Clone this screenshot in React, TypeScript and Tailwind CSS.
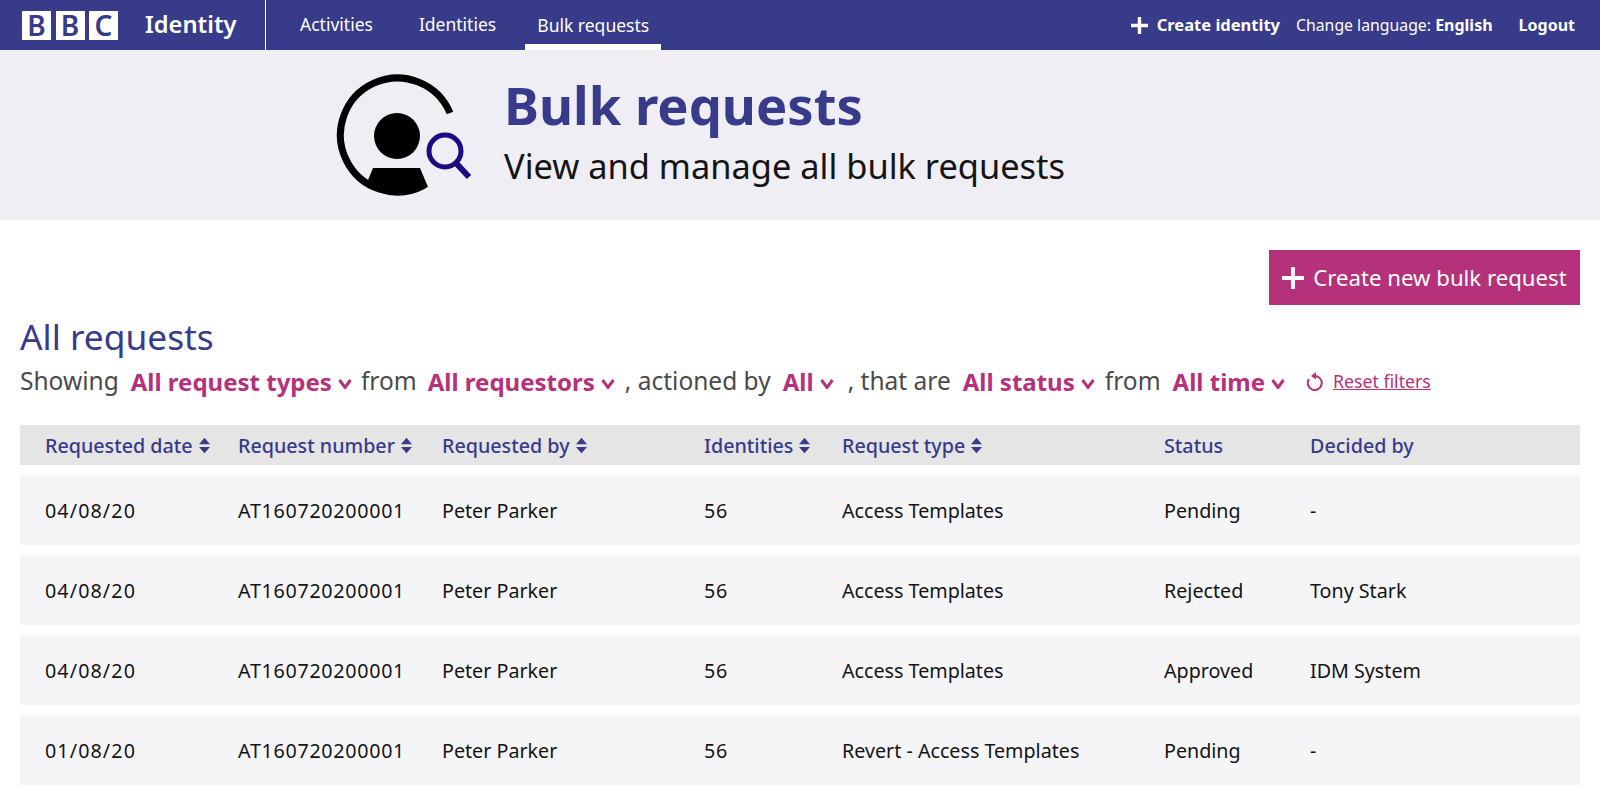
import React from 'react';

const rows = [
  { date: '04/08/20', type: 'Access Templates', status: 'Pending', decided: '-' },
  { date: '04/08/20', type: 'Access Templates', status: 'Rejected', decided: 'Tony Stark' },
  { date: '04/08/20', type: 'Access Templates', status: 'Approved', decided: 'IDM System' },
  { date: '01/08/20', type: 'Revert - Access Templates', status: 'Pending', decided: '-' },
];

const headers = [
  { label: 'Requested date', sort: true },
  { label: 'Request number', sort: true },
  { label: 'Requested by', sort: true },
  { label: 'Identities', sort: true },
  { label: 'Request type', sort: true },
  { label: 'Status', sort: false },
  { label: 'Decided by', sort: false },
];

const cols = 'grid grid-cols-[193px_204px_262px_138px_322px_146px_1fr] items-center px-[25px] pt-[2px]';

const Plus = ({ size, weight }: { size: number; weight: number }) => (
  <svg width={size} height={size} viewBox="0 0 20 20" className="shrink-0">
    <path d="M10 0V20M0 10H20" stroke="#fff" strokeWidth={weight} />
  </svg>
);

const Chevron = () => (
  <svg width="14" height="10" viewBox="0 0 14 10" className="shrink-0 mt-[5px]">
    <path d="M1.5 1L7 8.5L12.5 1" fill="none" stroke="#b5317a" strokeWidth="3" />
  </svg>
);

const Sort = () => (
  <svg width="11" height="17" viewBox="0 0 12 17" className="shrink-0">
    <path d="M6 0L12 7H0ZM0 10H12L6 17Z" fill="#383a8a" />
  </svg>
);

const Filter = ({ label }: { label: string }) => (
  <span className="flex items-center gap-[6px] text-[24px] font-bold text-[#b5317a]">
    {label}
    <Chevron />
  </span>
);

const Logo = () => (
  <div className="flex gap-[4.5px]">
    {['B', 'B', 'C'].map((letter, idx) => (
      <span
        key={idx}
        className="w-[29px] h-[29px] bg-white flex items-center justify-center text-[28px] leading-none font-semibold text-[#383a8a]"
      >
        {letter}
      </span>
    ))}
  </div>
);

const HeroIcon = () => (
  <svg width="145" height="130" viewBox="0 0 145 130" className="shrink-0 mt-[4px]">
    <path d="M122 41A57 57 0 1 0 96 113.5" fill="none" stroke="#000" strokeWidth="7" />
    <circle cx="69" cy="64" r="23" fill="#000" />
    <path d="M45 96H92L100 115A61 61 0 0 1 40 108Z" fill="#000" />
    <circle cx="117" cy="79" r="16" fill="none" stroke="#1d0a82" strokeWidth="5" />
    <path d="M128 91L141 105" stroke="#1d0a82" strokeWidth="6" />
  </svg>
);

const ResetIcon = () => (
  <svg width="18" height="19" viewBox="0 0 18 19" className="shrink-0">
    <path d="M3 7A7 7 0 1 0 9 4" fill="none" stroke="#b5317a" strokeWidth="2" />
    <path d="M10 0L5 4L10 7.5Z" fill="#b5317a" />
  </svg>
);

export default function App() {
  return (
    <div className="h-screen overflow-hidden bg-white font-['Noto_Sans',sans-serif]">
      {/* Nav */}
      <header className="h-[50px] bg-[#383a8a] flex items-stretch text-white">
        <div className="w-[266px] flex items-center pl-[22px] border-r border-white shrink-0">
          <Logo />
          <span className="ml-[27px] text-[23.7px] font-semibold">Identity</span>
        </div>
        <nav className="flex ml-[22px] text-[17.5px]">
          <a className="px-[12px] flex items-center pb-[1px]">Activities</a>
          <a className="ml-[22px] px-[12px] flex items-center pb-[1px]">Identities</a>
          <a className="ml-[17px] px-[12px] flex items-center border-b-[6px] border-white pt-[7px] w-[136px] justify-center">
            Bulk requests
          </a>
        </nav>
        <div className="ml-auto flex items-center pr-[25px] text-[16px]">
          <Plus size={17} weight={4} />
          <span className="ml-[9px] text-[16.5px] font-bold">Create identity</span>
          <span className="ml-[16px]">
            <span className="text-[15.8px]">Change language: </span>
            <span className="font-bold">English</span>
          </span>
          <span className="ml-[26px] font-bold">Logout</span>
        </div>
      </header>

      {/* Hero */}
      <section className="h-[170px] bg-[#eeeef4] flex items-center pl-[328px]">
        <HeroIcon />
        <div className="ml-[31px] mb-[6px]">
          <h1 className="text-[52.5px] leading-[60px] mb-[8px] font-bold text-[#383a8a]">Bulk requests</h1>
          <p className="text-[34.4px] leading-[46px] text-[#141414]">View and manage all bulk requests</p>
        </div>
      </section>

      {/* Content */}
      <main className="px-5">
        <div className="flex justify-end pt-[30px]">
          <button className="h-[55px] w-[311px] bg-[#b5317a] flex items-center justify-center gap-[9px] pt-[1px] text-white text-[22.2px]">
            <Plus size={22} weight={3.5} />
            Create new bulk request
          </button>
        </div>

        <h2 className="mt-[9px] text-[35.3px] leading-[44px] text-[#383a8a]">All requests</h2>

        <div className="mt-[3px] h-[40px] pt-[1px] flex items-center text-[24.5px] text-[#4a4a4a]">
          <span>Showing</span>
          <span className="ml-[12px]"><Filter label="All request types" /></span>
          <span className="ml-[9px]">from</span>
          <span className="ml-[11px]"><Filter label="All requestors" /></span>
          <span className="ml-[10px]">, actioned by</span>
          <span className="ml-[12px]"><Filter label="All" /></span>
          <span className="ml-[14px]">, that are</span>
          <span className="ml-[12px]"><Filter label="All status" /></span>
          <span className="ml-[10px]">from</span>
          <span className="ml-[12px]"><Filter label="All time" /></span>
          <span className="ml-[21px] flex items-center gap-[9px]">
            <ResetIcon />
            <a className="text-[17.7px] text-[#b5317a] underline">Reset filters</a>
          </span>
        </div>

        {/* Table */}
        <div className={`${cols} mt-[24px] h-[40px] bg-[#e5e5e5] text-[19.7px] font-medium text-[#383a8a]`}>
          {headers.map((h) => (
            <div key={h.label} className="flex items-center gap-[6px]">
              {h.label}
              {h.sort && <Sort />}
            </div>
          ))}
        </div>
        <div className="mt-[10px] flex flex-col gap-[10px]">
          {rows.map((row, idx) => (
            <div key={idx} className={`${cols} h-[70px] bg-[#f5f5f8] text-[19.7px] text-[#141414]`}>
              <div className="tracking-[1.1px]">{row.date}</div>
              <div className="tracking-[0.7px]">AT160720200001</div>
              <div>Peter Parker</div>
              <div className="tracking-[0.7px]">56</div>
              <div>{row.type}</div>
              <div>{row.status}</div>
              <div>{row.decided}</div>
            </div>
          ))}
        </div>
      </main>
    </div>
  );
}
